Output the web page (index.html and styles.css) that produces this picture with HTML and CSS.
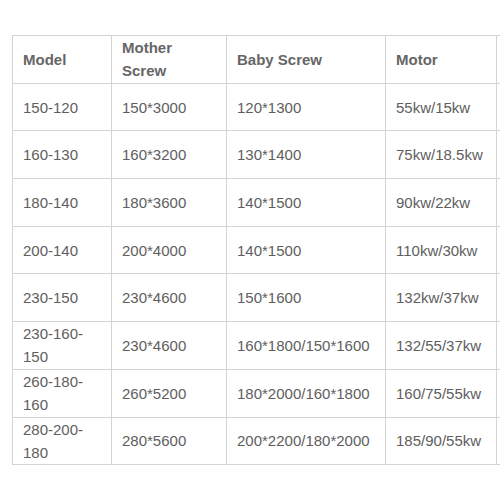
FILE: index.html
```html
<!DOCTYPE html>
<html>
<head>
<meta charset="utf-8">
<link rel="stylesheet" href="styles.css">
</head>
<body>
<div class="wrap">
<table class="spec">
  <colgroup>
    <col class="c1"><col class="c2"><col class="c3"><col class="c4"><col class="c5">
  </colgroup>
  <tr class="head"><td>Model</td><td>Mother Screw</td><td>Baby Screw</td><td>Motor</td><td class="edge"></td></tr>
  <tr><td>150-120</td><td>150*3000</td><td>120*1300</td><td>55kw/15kw</td><td class="edge"></td></tr>
  <tr><td>160-130</td><td>160*3200</td><td>130*1400</td><td>75kw/18.5kw</td><td class="edge"></td></tr>
  <tr><td>180-140</td><td>180*3600</td><td>140*1500</td><td>90kw/22kw</td><td class="edge"></td></tr>
  <tr><td>200-140</td><td>200*4000</td><td>140*1500</td><td>110kw/30kw</td><td class="edge"></td></tr>
  <tr><td>230-150</td><td>230*4600</td><td>150*1600</td><td>132kw/37kw</td><td class="edge"></td></tr>
  <tr><td>230-160-150</td><td>230*4600</td><td>160*1800/150*1600</td><td>132/55/37kw</td><td class="edge"></td></tr>
  <tr><td>260-180-160</td><td>260*5200</td><td>180*2000/160*1800</td><td>160/75/55kw</td><td class="edge"></td></tr>
  <tr><td>280-200-180</td><td>280*5600</td><td>200*2200/180*2000</td><td>185/90/55kw</td><td class="edge"></td></tr>
</table>
</div>
</body>
</html>
```
FILE: styles.css
```css
html, body {
  margin: 0;
  padding: 0;
  background: #ffffff;
  overflow: hidden;
  width: 500px;
  height: 500px;
}
.wrap {
  padding: 35px 0 0 12px;
}
.spec {
  border-collapse: collapse;
  table-layout: fixed;
  width: 489px;
  font-family: "Liberation Sans", Arial, sans-serif;
  font-size: 15px;
  line-height: 23px;
  color: #5e5e5e;
}
.c1 { width: 99px; }
.c2 { width: 115px; }
.c3 { width: 159px; }
.c4 { width: 111px; }
.c5 { width: 5px; }
.spec td {
  border: 1px solid #d4d4d4;
  height: 47.7px;
  box-sizing: border-box;
  padding: 0 10px;
  vertical-align: middle;
  word-wrap: break-word;
}
.spec td.edge {
  padding: 0;
  border-right-color: transparent;
}
.head td {
  font-weight: bold;
  color: #666666;
}
```
